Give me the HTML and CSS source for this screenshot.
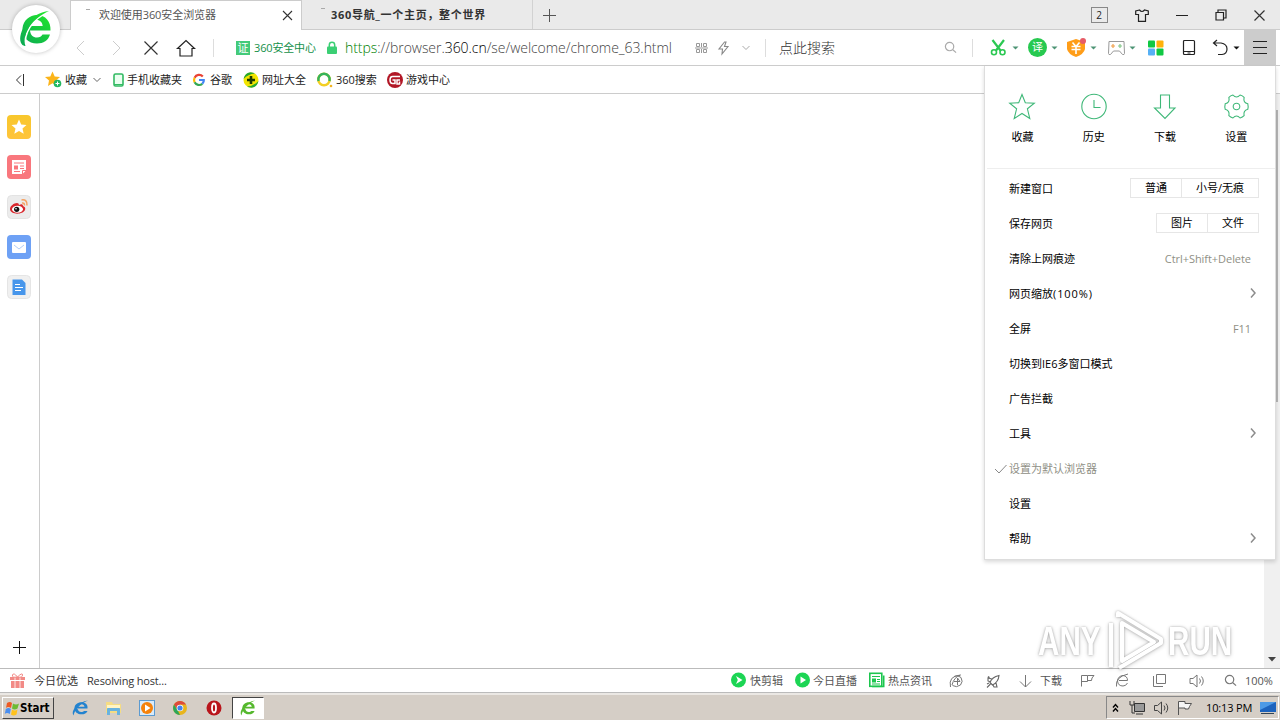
FILE: index.html
```html
<!DOCTYPE html>
<html lang="zh-CN">
<head>
<meta charset="utf-8">
<title>欢迎使用360安全浏览器</title>
<link rel="stylesheet" href="styles.css">
</head>
<body>
<svg width="0" height="0" class="defs">
  <defs>
    <linearGradient id="gg" gradientUnits="userSpaceOnUse" x1="4" y1="34" x2="30" y2="4"><stop offset="0" stop-color="#0bab52"/><stop offset="1" stop-color="#22e52c"/></linearGradient>
    <linearGradient id="gy" x1="0" y1="0" x2="0" y2="1"><stop offset="0" stop-color="#f8c72b"/><stop offset="1" stop-color="#ffc43c"/></linearGradient>
    <symbol id="caret" viewBox="0 0 7 4"><path d="M0.5 0.5h6l-3 3z" fill="currentColor"/></symbol>
    <symbol id="chev" viewBox="0 0 8 12"><path d="M2 1.500l4 4.500-4 4.500" fill="none" stroke="#8c8c8c" stroke-width="1.500"/></symbol>
    <symbol id="down" viewBox="0 0 10 6"><path d="M1.500 1l3.500 3.500L8.500 1" fill="none" stroke="currentColor"/></symbol>
    <symbol id="mag" viewBox="0 0 14 14"><circle cx="6" cy="6" r="4.500" fill="none" stroke="currentColor" stroke-width="1.300"/><path d="M9.500 9.500l3.500 3" stroke="currentColor" stroke-width="1.300"/></symbol>
    <symbol id="elogo" viewBox="0 0 34 38"><path d="M9 20h22C32 11 27 5.500 19 5.500c-8 0-14 6-14 14C5 28 11 34 19 34c6 0 10-3 12-8h-7c-1.500 2-3 2.500-5.500 2.500-4 0-6-2.500-6.500-6z M12 16c1-4 3.500-6 7-6s5.500 2 6 6z" fill="currentColor" fill-rule="evenodd"/><path d="M3 37C-3 27 9 6 32 1 17 8 5 23 3 37z" fill="currentColor"/></symbol>
    <symbol id="speaker" viewBox="0 0 16 14"><path d="M1 4.500h3L8 1v12L4 9.500H1zM10.500 4.500q2 2.500 0 5M12.500 2.500q3.500 4.500 0 9" fill="none" stroke="currentColor"/></symbol>
  </defs>
</svg>

<header class="tabs">
  <div class="tab active">
    <i class="spin"></i><span class="tab-title">欢迎使用360安全浏览器</span>
    <svg width="11" height="11"><path d="M1 1l9 9M10 1L1 10" stroke="#333" stroke-width="1.100"/></svg>
  </div>
  <div class="tab second"><i class="spin"></i><span class="tab-title">360导航_一个主页，整个世界</span></div>
  <svg class="newtab" width="13" height="13"><path d="M6.500 0v13M0 6.500h13" stroke="#555"/></svg>
  <div class="controls">
    <span class="count">2</span>
    <svg width="14" height="13"><path d="M4.500 1L.7 2v3.500h2.800v6.800h7V5.500h2.800V2L9.500 1Q7 4 4.500 1z" fill="none" stroke="#222" stroke-width="1.200"/></svg>
    <svg width="12" height="12"><path d="M0 6.500h12" stroke="#222"/></svg>
    <svg width="12" height="12"><path d="M1 3.500h7.500v7.500H1zM3 3V1h8v8H9" fill="none" stroke="#222" stroke-width="1.200"/></svg>
    <svg width="11" height="11"><path d="M.5.500l10 10M10.500.500l-10 10" stroke="#333" stroke-width="1.200"/></svg>
  </div>
</header>

<div class="toolbar">
  <svg class="mid" width="11" height="16"><path d="M9 1L2 8l7 7" fill="none" stroke="#ccc"/></svg>
  <svg class="mid" width="11" height="16"><path d="M3 1l7 7-7 7" fill="none" stroke="#ccc"/></svg>
  <svg class="mid" width="15" height="15"><path d="M1.500 1.500l13 13M14.500 1.500l-13 13" stroke="#333" stroke-width="1.200"/></svg>
  <svg class="mid" width="19" height="18"><path d="M1.500 9.500l8.500-8 8.500 8H16v7.500H4V9.500z" fill="none" stroke="#222" stroke-width="1.200"/></svg>
  <i class="sep"></i>
  <span class="cert">证</span>
  <span class="green">360安全中心</span>
  <svg width="12" height="14"><path d="M3.300 6V4a2.700 2.700 0 0 1 5.400 0v2" fill="none" stroke="#3bcf74" stroke-width="1.500"/><rect x="1" y="5.500" width="10" height="7.500" rx="1" fill="#3bcf74"/></svg>
  <span class="url"><b class="https">https</b>://browser.<b class="host">360.cn</b>/se/welcome/chrome_63.html</span>
  <svg width="13" height="12"><path d="M1.500 1.500h3v3h-3zM8.500 1.500h3v3h-3zM1.500 7.500h3v3h-3zM8.500 7.500h3v3h-3zM6.500 1v4M6.500 7v4M0 6h13" fill="none" stroke="#999"/></svg>
  <svg width="11" height="14"><path d="M6.500 1L1 8h3.500L4 13l6-7.500H6.500L8 1z" fill="none" stroke="#888" stroke-width="1.100"/></svg>
  <svg class="gray mid" width="10" height="6"><use href="#down"/></svg>
  <i class="sep"></i>
  <span class="searchtext">点此搜索</span>
  <svg class="gray" width="13" height="13"><use href="#mag"/></svg>
  <i class="sep"></i>
  <svg width="17" height="17"><path d="M2.500 1l8 10.500M14 1L6 11.500" stroke="#2bc852" stroke-width="2.200"/><circle cx="4" cy="13.300" r="2.500" fill="none" stroke="#2bc852" stroke-width="1.600"/><circle cx="12.500" cy="13.300" r="2.500" fill="none" stroke="#2bc852" stroke-width="1.600"/></svg>
  <svg class="dg" width="7" height="4"><use href="#caret"/></svg>
  <span class="trans">译</span>
  <svg class="dg" width="7" height="4"><use href="#caret"/></svg>
  <svg width="20" height="20"><path d="M9 1l9 3v7q-1 5-9 8-8-3-9-8V4z" fill="#ff9d18"/><path d="M5.500 4.500l3.500 4 3.500-4M4.500 8.500h9M4.500 11.500h9M9 8.500V16" fill="none" stroke="#fff" stroke-width="1.600"/><circle cx="16" cy="3" r="3" fill="#e65b66"/></svg>
  <svg class="dg" width="7" height="4"><use href="#caret"/></svg>
  <svg width="19" height="16"><path d="M2 1.500h15l.5 12q0 1.500-2 1l-3-3.500h-6l-3 3.500q-2 .5-2-1z" fill="none" stroke="#999"/><path d="M4 6h4M6 4v4" stroke="#f0a04b" stroke-width="1.200"/><path d="M11 6h4M13 4v4" stroke="#83c687" stroke-width="1.200"/></svg>
  <svg class="dg" width="7" height="4"><use href="#caret"/></svg>
  <svg width="16" height="16"><rect width="7" height="7" rx="1" y=".5" fill="#10c843"/><rect x="8.500" width="7" height="7" rx="1" y=".5" fill="#ffb20a"/><rect y="8.500" width="7" height="7" rx="1" fill="#56b0f5"/><rect x="8.500" y="8.500" width="7" height="7" rx="1" fill="#10c843"/></svg>
  <svg width="13" height="17"><rect x="1.500" y="1.500" width="11" height="14" rx="1" fill="none" stroke="#222" stroke-width="1.200"/><path d="M1.500 12.500h11M5.500 14h3" stroke="#222"/></svg>
  <svg width="18" height="17"><path d="M5 1L1.500 4 5 7M1.500 4H9q6 1 6 6t-5 5.500H6" fill="none" stroke="#222" stroke-width="1.200"/></svg>
  <svg class="black" width="7" height="4"><use href="#caret"/></svg>
  <span class="menu-btn"><svg width="14" height="13"><path d="M0 .5h14M0 6.500h14M0 12.500h14" stroke="#222"/></svg></span>
</div>

<nav class="bookmarks">
  <svg width="10" height="12"><path d="M7 1.500L2.500 6 7 10.500M9.500 0v12" fill="none" stroke="#333"/></svg>
  <svg width="17" height="17"><path d="M7.500.500l2.200 5 5.300.5-4 3.600 1.200 5.400-4.700-2.800L3 15l1-5.400L0 6l5.300-.5z" fill="#fbb41a"/><circle cx="12.500" cy="12.500" r="3.800" fill="#22b75f"/><path d="M10.500 12.500h4M12.500 10.500v4" stroke="#fff"/></svg>
  <span>收藏</span>
  <svg class="darkgray" width="10" height="6"><use href="#down"/></svg>
  <svg width="11" height="14"><rect x="1" y="1" width="9" height="12" rx="1.500" fill="#eafff0" stroke="#32ba62" stroke-width="1.600"/><path d="M1 11.500h9" stroke="#32ba62"/></svg>
  <span>手机收藏夹</span>
  <svg width="12" height="12" viewBox="0 0 12 12" fill="none" stroke-width="2.200"><path d="M9.800 2.500A5 5 0 0 0 1.600 3.700" stroke="#ea4335"/><path d="M1.600 3.700a5 5 0 0 0 0 4.600" stroke="#fbbc05"/><path d="M1.600 8.300a5 5 0 0 0 7.700 1.500" stroke="#34a853"/><path d="M9.300 9.800Q11 8 10.800 6H6" stroke="#4285f4"/></svg>
  <span>谷歌</span>
  <svg width="16" height="16"><circle cx="8" cy="8" r="7.500" fill="#f2e500"/><path d="M.6 7A7.500 7.500 0 0 1 12 1.500Q5 2 .6 7z" fill="#25a831"/><path d="M15.400 9A7.500 7.500 0 0 1 4 14.500Q11 14 15.400 9z" fill="#25a831"/><path d="M4 8h8M8 4v8" stroke="#1d3b00" stroke-width="2.600"/></svg>
  <span>网址大全</span>
  <svg width="16" height="16"><circle cx="7" cy="7.500" r="5.700" fill="none" stroke="#f3cf23" stroke-width="2.500"/><path d="M1.500 9a5.700 5.700 0 1 1 11 0" fill="none" stroke="#35b45b" stroke-width="2.500"/><circle cx="14" cy="14" r="1.300" fill="#f3b423"/></svg>
  <span>360搜索</span>
  <svg width="16" height="16"><circle cx="8" cy="8" r="8" fill="#b21726"/><path d="M13 4.500H5.500q-2.500 0-2.500 3.500t2.500 3.500H8V8H5.500M13 8h-3v4h2.500V9.500" fill="none" stroke="#fff" stroke-width="1.500"/></svg>
  <span>游戏中心</span>
</nav>

<main class="content">
  <aside class="side">
    <svg width="24" height="24"><rect width="24" height="24" rx="4" fill="url(#gy)"/><path d="M12 4.500l2.200 5 5.300.5-4 3.500 1.200 5.300-4.700-2.800-4.700 2.800 1.200-5.300-4-3.500 5.300-.5z" fill="#fff"/></svg>
    <svg width="24" height="24"><rect width="24" height="24" rx="4" fill="#f9777d"/><path d="M5 5h14v10.500L15.500 19H5z" fill="#fff"/><path d="M7 8h10M13 11h4M13 13.500h4M7 16.500h6" stroke="#f9777d"/><path d="M15.500 19v-3.500H19" stroke="#f9777d" fill="none"/><rect x="7" y="10.500" width="4" height="4" fill="#f9777d"/></svg>
    <svg width="24" height="24"><rect x=".5" y=".5" width="23" height="23" rx="4" fill="#ececec" stroke="#e3e3e3"/><path d="M3 14c0-3 4-6 7-6q2 0 2 2 4-2 4 1 3 1 2 4c-2 5-15 5-15-1z" fill="#d9262c"/><ellipse cx="10.500" cy="14.300" rx="5.500" ry="3.500" fill="#fff"/><circle cx="9.700" cy="14.300" r="2.600" fill="#111"/><circle cx="9" cy="13.700" r=".8" fill="#fff"/><path d="M14.500 5q6-1 5.500 5.500M15 8q2.500-.5 2.500 2.500" fill="none" stroke="#f5a162" stroke-width="1.500"/></svg>
    <svg width="24" height="24"><rect width="24" height="24" rx="4" fill="#6ea1f5"/><rect x="5" y="7" width="14" height="11" rx="1" fill="#fff"/><path d="M7 10l5 4 5-4" fill="none" stroke="#b2cdf9"/></svg>
    <svg width="24" height="24"><rect x=".5" y=".5" width="23" height="23" rx="4" fill="#f0f0f0" stroke="#e5e5e5"/><path d="M5.500 4.500H15l3.500 3.500v12h-13z" fill="#4796eb"/><path d="M8 9.500h5M8 12.500h8M8 15.500h6" stroke="#fff"/></svg>
    <svg class="add" width="13" height="13"><path d="M6.500 0v13M0 6.500h13" stroke="#111"/></svg>
  </aside>
  <div class="page"></div>
  <div class="scroll"><i class="thumb"></i><svg width="8" height="5"><path d="M0 0h8L4 4.500z" fill="#444"/></svg></div>
</main>

<footer class="status">
  <svg width="16" height="16"><path d="M0 4h15v3H0zM1 8h13v7H1z" fill="#f28a86"/><path d="M5 4v11M10 4v11" stroke="#fff" stroke-width=".8"/><path d="M7.500 4Q3.500-1 2.500 2t5 2q5-5 5-2t-5 2" fill="none" stroke="#f28a86"/></svg>
  <span>今日优选</span>
  <span class="resolve">Resolving host...</span>
  <svg width="15" height="15"><circle cx="7.500" cy="7" r="7.500" fill="#1cd554"/><path d="M5 3l6.500 4-6.500 4 1.800-4z" fill="#fff"/></svg>
  <span>快剪辑</span>
  <svg width="15" height="15"><circle cx="7.500" cy="7" r="7.500" fill="#1cd554"/><path d="M5.500 3.500l5.500 3.500-5.500 3.500z" fill="#fff"/></svg>
  <span>今日直播</span>
  <svg width="16" height="15"><rect x=".8" y=".3" width="12" height="13" fill="#fff" stroke="#1cc64e" stroke-width="1.600"/><path d="M14.700 2.500v11H3" stroke="#1cc64e" stroke-width="1.600" fill="none"/><path d="M3 3.500h8M8 6.500h3M8 8.500h3M3 11h8" stroke="#1cc64e"/><rect x="3" y="5.500" width="4" height="4" fill="#1cc64e"/></svg>
  <span>热点资讯</span>
  <svg width="14" height="14"><path d="M1.500 13Q-1 2 11.500 1 5 3 3 11M5 2.500q4-2 7 1 2.500 4-.5 7.500-4 3-8 .5M5 7.500h6L8.500 4v7" fill="none" stroke="#777"/></svg>
  <svg width="14" height="14"><path d="M4 8.500Q6 3 13 1.500 12.500 8 6.500 11zM6 5L2 4v3l2.500 1M10 9l1 4H8l-1-2M1 13.500l3.500-3.500M1 10l2-1M2 2.500l1.500 1" fill="none" stroke="#666" stroke-width="1.100"/></svg>
  <svg width="13" height="14"><path d="M6.500 1v12M1 7.500L6.500 13 12 7.500" fill="none" stroke="#777"/></svg>
  <span>下载</span>
  <svg width="15" height="13"><path d="M.5 12.500v-11h6v6h-6M6.500 1.500h6.500l-2 2.500-.5 2.500h-4" fill="none" stroke="#777"/></svg>
  <svg width="15" height="15"><path d="M1.500 13.500Q0 4 13 1M4 7.500h8.500q0-4.500-4.500-5Q3 3 2.500 8q.5 5 5.500 5 3 0 4.500-3" fill="none" stroke="#777"/></svg>
  <svg width="13" height="13"><path d="M3.500.500h9v9h-9zM.5 2v10.500H10" fill="none" stroke="#777"/></svg>
  <svg class="statgray" width="16" height="14"><use href="#speaker"/></svg>
  <svg class="statgray" width="13" height="13"><use href="#mag"/></svg>
  <span class="pct">100%</span>
</footer>

<div class="taskbar">
  <div class="start"><svg width="16" height="16"><path d="M3 3q3-2 5 0L7 8Q4 6 2 8z" fill="#ee5a24"/><path d="M9 3.500q3 2 6 0L13.500 8.500q-3 2-5.500 0z" fill="#6dbb32"/><path d="M1.800 9q3-2 5 0l-1 5q-3-2-5 0z" fill="#4b8ff0"/><path d="M8 9.500q3 2 5.500 0l-1 5q-3 2-5.500 0z" fill="#ffc21c"/></svg><b>Start</b></div>
  <svg class="ie" width="17" height="16" viewBox="0 0 34 38" preserveAspectRatio="none"><use href="#elogo"/></svg>
  <svg width="17" height="16"><path d="M1 2h6l1 2h8v9H1z" fill="#f5dc83"/><path d="M2 5h13v3H2z" fill="#fff4c4"/><path d="M2 15V9q0-1 1-1h11q1 0 1 1v6h-3v-4H5v4z" fill="#69b3df"/></svg>
  <svg width="16" height="16"><rect x=".5" y=".5" width="15" height="15" fill="#d9ebfa" stroke="#5c9bd1"/><circle cx="8" cy="8" r="6" fill="#f5820b"/><path d="M6 4.500L11.500 8 6 11.500z" fill="#fff"/></svg>
  <svg width="14" height="14"><circle cx="7" cy="7" r="7" fill="#e8b51c"/><path d="M1 3.500A7 7 0 0 1 13 3.500H7L4 8z" fill="#dd4a3d"/><path d="M1 3.500L5 10l2 4A7 7 0 0 1 1 3.500z" fill="#2ca65a"/><circle cx="7" cy="7" r="3.300" fill="#fff"/><circle cx="7" cy="7" r="2.600" fill="#4384ed"/></svg>
  <svg width="16" height="16"><circle cx="8" cy="8" r="7.500" fill="#b9151b"/><ellipse cx="8" cy="8" rx="2" ry="4.500" fill="#b9151b" stroke="#fff" stroke-width="1.800"/></svg>
  <div class="running"><svg width="16" height="16" viewBox="0 0 34 38" preserveAspectRatio="none"><use href="#elogo"/></svg></div>
  <div class="tray">
    <svg width="8" height="10"><path d="M0 4.500l2.500-3 2.500 3M0 8.500l2.500-3 2.500 3" fill="none" stroke="#000" stroke-width="1.400"/></svg>
    <svg width="16" height="15"><path d="M5.500 3.500h10v8h-10zM7 14h7" fill="#999" stroke="#333"/><path d="M1 1v4h4V1M3 5v8h3" fill="none" stroke="#333"/></svg>
    <svg width="17" height="14" class="traygray"><use href="#speaker"/></svg>
    <svg width="16" height="15"><path d="M1.500 15V1.500H8v2h6.500l-2 3-1 2.500H8V8H2" fill="#f5f5f5" stroke="#555"/></svg>
    <span>10:13 PM</span>
    <svg width="16" height="14"><rect x="-1" y="1" width="16" height="10" fill="#1d63bd"/><path d="M-1 1h16L-1 9z" fill="#4d9ae6"/><path d="M0 12.500h13" stroke="#345"/></svg>
  </div>
</div>

<div class="badge"><svg width="34" height="38"><path d="M3.500 18C4.500 10.500 10.500 5 18 5c8.500 0 14 6.500 13.500 15.500H11c.5 4.500 3 7 7 7 2.700 0 4.500-1 5.500-3h7.500c-1.700 6-6.500 9-13 9C9.500 33.500 2.500 27.500 3.500 18zM11.500 16h12.200c-.4-3.600-2.500-6-6-6s-5.500 2.400-6.200 6z" fill="url(#gg)" fill-rule="evenodd"/><path d="M30 1.500C13 9 4 24 7 36.500" fill="none" stroke="#fff" stroke-width="1.600"/><path d="M30 1C11 3-2 22 2 33q1.500 3.500 4.500 3C2.500 24 13 8.500 30 1z" fill="url(#gg)"/></svg></div>

<section class="menu">
  <div class="quick">
    <div><svg width="28" height="28"><path d="M14 1.500l3.300 8.200 9 .5-6.900 5.600 2.400 9.700-7.800-5-7.800 5 2.400-9.700-6.900-5.600 9-.5z"/></svg><span>收藏</span></div>
    <div><svg width="28" height="28"><circle cx="15" cy="13.500" r="12.200"/><path d="M15 7v7.500h6.500"/></svg><span>历史</span></div>
    <div><svg width="28" height="28"><path d="M10.500 2h9v13h5.500L15 25.500 4.500 15h6z"/></svg><span>下载</span></div>
    <div><svg width="28" height="28"><g transform="translate(14.500 13.500)"><path d="M11.300-2.700Q12 0 11.300 2.700 6.500 3.800 7.600 9.200 6 10.800 3.600 11.500 0 7.500-3.600 11.500-6 10.800-7.600 9.200-6.500 3.800-11.300 2.700-12 0-11.300-2.700-6.500-3.800-7.600-9.200-6-10.800-3.600-11.500 0-7.500 3.600-11.500 6-10.800 7.600-9.200 6.500-3.800 11.300-2.700z"/><circle r="3.300"/></g></svg><span>设置</span></div>
  </div>
  <ul>
    <li><span>新建窗口</span><div class="seg"><b>普通</b><b class="wide">小号/无痕</b></div></li>
    <li><span>保存网页</span><div class="seg"><b>图片</b><b>文件</b></div></li>
    <li><span>清除上网痕迹</span><em>Ctrl+Shift+Delete</em></li>
    <li><span>网页缩放<b class="scale">(100%)</b></span><svg width="8" height="12"><use href="#chev"/></svg></li>
    <li><span>全屏</span><em class="f11">F11</em></li>
    <li><span>切换到IE6多窗口模式</span></li>
    <li><span>广告拦截</span></li>
    <li><span>工具</span><svg width="8" height="12"><use href="#chev"/></svg></li>
    <li class="off"><svg class="tick" width="13" height="10"><path d="M0 5l4 4 7.500-8" fill="none" stroke="#888"/></svg><span>设置为默认浏览器</span></li>
    <li><span>设置</span></li>
    <li><span>帮助</span><svg width="8" height="12"><use href="#chev"/></svg></li>
  </ul>
</section>

<div class="mark"><span>ANY</span><svg width="60" height="66"><path d="M6 59V15M17 15v38L49 34zM13 9V5l43 26v4L14 60"/></svg><span>RUN</span></div>
</body>
</html>
```
FILE: styles.css
```css
* { box-sizing: border-box; }
body {
  margin: 0; width: 1280px; height: 720px; overflow: hidden; position: relative;
  display: flex; flex-direction: column; background: #fff; color: #222;
  font: 11px/16px "Open Sans", "Noto Sans CJK SC", sans-serif;
}
svg { display: block; overflow: visible; flex: none; }
span, b, em { white-space: nowrap; font-style: normal; }
.defs { position: absolute; }
.gray { color: #aaa; }
.darkgray { color: #666; }
.dg { color: #4d9474; }
.black { color: #111; }
.mid { justify-self: center; }

.tabs { height: 30px; flex: none; background: #eaeaea; border-bottom: 1px solid #ccc; display: grid; grid-template-columns: 232px 231px 33px 1fr 202px; padding-left: 70px; }
.tab { height: 29px; display: flex; align-items: center; color: #333; }
.active { background: #fff; border: 1px solid #ccc; border-bottom: 0; height: 30px; padding: 0 8px 1px 15px; color: #555; }
.active svg { margin-left: auto; }
.active .tab-title { letter-spacing: -.08px; }
.spin { width: 4px; height: 1px; margin: -12px 9px 0 0; background: #aaa; }
.second { padding-left: 19px; border-right: 1px solid #d2d2d2; font-weight: 700; }
.second .spin { margin-right: 6px; }
.second .tab-title { letter-spacing: .7px; }
.newtab { align-self: center; justify-self: center; }
.controls { grid-column: 5; display: grid; grid-template-columns: 42px 43px 38px 39px 38px; align-items: center; justify-items: center; }
.count { width: 17px; height: 16px; border: 1px solid #888; font-size: 10px; line-height: 14px; text-align: center; }

.toolbar { height: 36px; flex: none; border-bottom: 1px solid #ccc; display: grid; align-items: center; padding-left: 63px;
  grid-template-columns: 35px 35px 35px 35px 33px 18px 72px 19px 350px 23px 20px 15px 26px 165px 16px 30px 22px 16px 23px 16px 23px 17px 22px 19px 34px 30px 21px 11px 32px; }
.toolbar .sep { width: 1px; height: 18px; background: #ddd; margin-left: 10px; }
.toolbar .sep:nth-of-type(n+2) { margin-left: 12px; }
.cert { width: 14px; height: 14px; background: #43ca79; color: #fff; font-size: 11px; line-height: 13px; text-align: center; }
.green { color: #149049; letter-spacing: -.15px; }
.url { font-size: 14px; line-height: 20px; font-weight: 300; color: #444; letter-spacing: -.05px; padding-top: 1px; }
.url b { font-weight: 300; }
.https { color: #008000; }
.url .host { color: #000; }
.searchtext { font-size: 14px; line-height: 20px; color: #333; font-weight: 300; }
.trans { width: 19px; height: 19px; border-radius: 50%; background: #27c950; color: #fff; text-align: center; line-height: 18px; font-size: 11px; }
.menu-btn { height: 35px; background: #ccc; display: flex; align-items: center; justify-content: center; }

.bookmarks { height: 28px; flex: none; border-bottom: 1px solid #ccc; padding-left: 14px; display: grid; align-items: center;
  grid-template-columns: 31px 20px 27px 21px 14px 66px 17px 33px 19px 55px 19px 51px 19px 60px; }

.content { flex: 1; display: grid; grid-template-columns: 40px 1fr 16px; }
.side { border-right: 1px solid #ccc; padding: 21px 0 14px 7px; display: flex; flex-direction: column; gap: 16px; }
.side .add { margin: auto 0 0 6px; }
.scroll { background: #f0f0f0; display: flex; flex-direction: column; align-items: center; padding: 16px 0 6px; justify-content: space-between; }
.thumb { width: 12px; height: 292px; background: #b5b5b5; }

.status { height: 25px; flex: none; border-top: 1px solid #bbb; border-bottom: 1px solid #bbb; color: #555; padding-left: 10px; display: grid; align-items: center;
  grid-template-columns: 24px 53px 644px 19px 45px 18px 56px 19px 61px 37px 33px 21px 41px 34px 38px 36px 35px 21px 35px; }
.status span:nth-of-type(-n+2) { color: #333; }
.resolve { letter-spacing: -.17px; }
.statgray { color: #777; }

.taskbar { height: 27px; flex: none; background: #d5cec6; border-top: 2px solid #ebe8e4; display: grid; align-items: center; padding: 0 1px 0 2px;
  grid-template-columns: 70px 33px 34px 34px 33px 26px 33px 1fr 173px; color: #000; }
.start { width: 52px; height: 22px; border: 1px solid; border-color: #fff #444 #444 #fff; display: flex; align-items: center; padding-left: 1px; }
.start b { font-family: "DejaVu Sans Condensed", sans-serif; font-size: 11.5px; }
.ie { color: #2383cf; }
.running { width: 32px; height: 22px; background: #fff; border: 1px solid; border-color: #444 #fff #fff #444; display: flex; align-items: center; justify-content: center; color: #55b82d; }
.tray { grid-column: 9; height: 23px; border: 1px solid; border-color: #888 #fff #fff #888; padding-left: 6px; display: grid; align-items: center; grid-template-columns: 16px 24px 24px 29px 55px 16px; }
.tray span { letter-spacing: -.15px; }
.traygray { color: #444; }

.badge { position: absolute; left: 12px; top: 5px; width: 48px; height: 48px; border-radius: 50%; background: #fff; box-shadow: 0 0 4px rgba(0,0,0,.25); display: flex; align-items: center; justify-content: center; }

.menu { position: absolute; left: 984px; top: 66px; width: 292px; height: 494px; background: #fff; border: 1px solid #ddd; border-top: 0; box-shadow: 0 2px 4px rgba(0,0,0,.15); color: #000; }
.quick { height: 103px; margin-left: 2px; border-bottom: 1px solid #eee; display: grid; grid-template-columns: repeat(4, 71.200px); padding-top: 27px; }
.quick div { display: flex; flex-direction: column; align-items: center; gap: 8px; }
.quick svg { fill: none; stroke: #3fb878; stroke-width: 1.100; margin-left: -1px; }
.menu ul { list-style: none; margin: 0; padding: 2px 16px 0 24px; }
.menu li { height: 35px; display: flex; align-items: center; justify-content: space-between; }
.menu li > svg:last-child { margin: -2px 2px 0 0; }
.menu em { color: #8f8f85; margin-right: 8px; letter-spacing: -.05px; }
.menu .off { color: #8f8f85; justify-content: flex-start; }
.menu .tick { margin-left: -14px; margin-right: 1px; }
.scale { font-weight: 400; letter-spacing: .9px; }
.seg { display: flex; height: 20px; border: 1px solid #e6e6e6; margin-top: -2px; }
.seg b { width: 50px; font-weight: 400; line-height: 18px; text-align: center; }
.seg b + b { border-left: 1px solid #e6e6e6; width: 51px; }
.seg b.wide { width: 77px; }

.mark { position: absolute; left: 1038px; top: 608px; height: 66px; display: flex; align-items: center; color: #fff; font: 700 40px/44px "Liberation Sans", sans-serif; filter: drop-shadow(0 0 1px rgba(0,0,0,.35)) drop-shadow(0 1px 2px rgba(0,0,0,.25)); opacity: .75; }
.mark span { display: block; width: 66px; transform: scaleX(.74); transform-origin: left; }
.mark svg { fill: none; stroke: #fff; stroke-width: 4; stroke-linejoin: round; margin: 0 3px 0 1px; }
```
